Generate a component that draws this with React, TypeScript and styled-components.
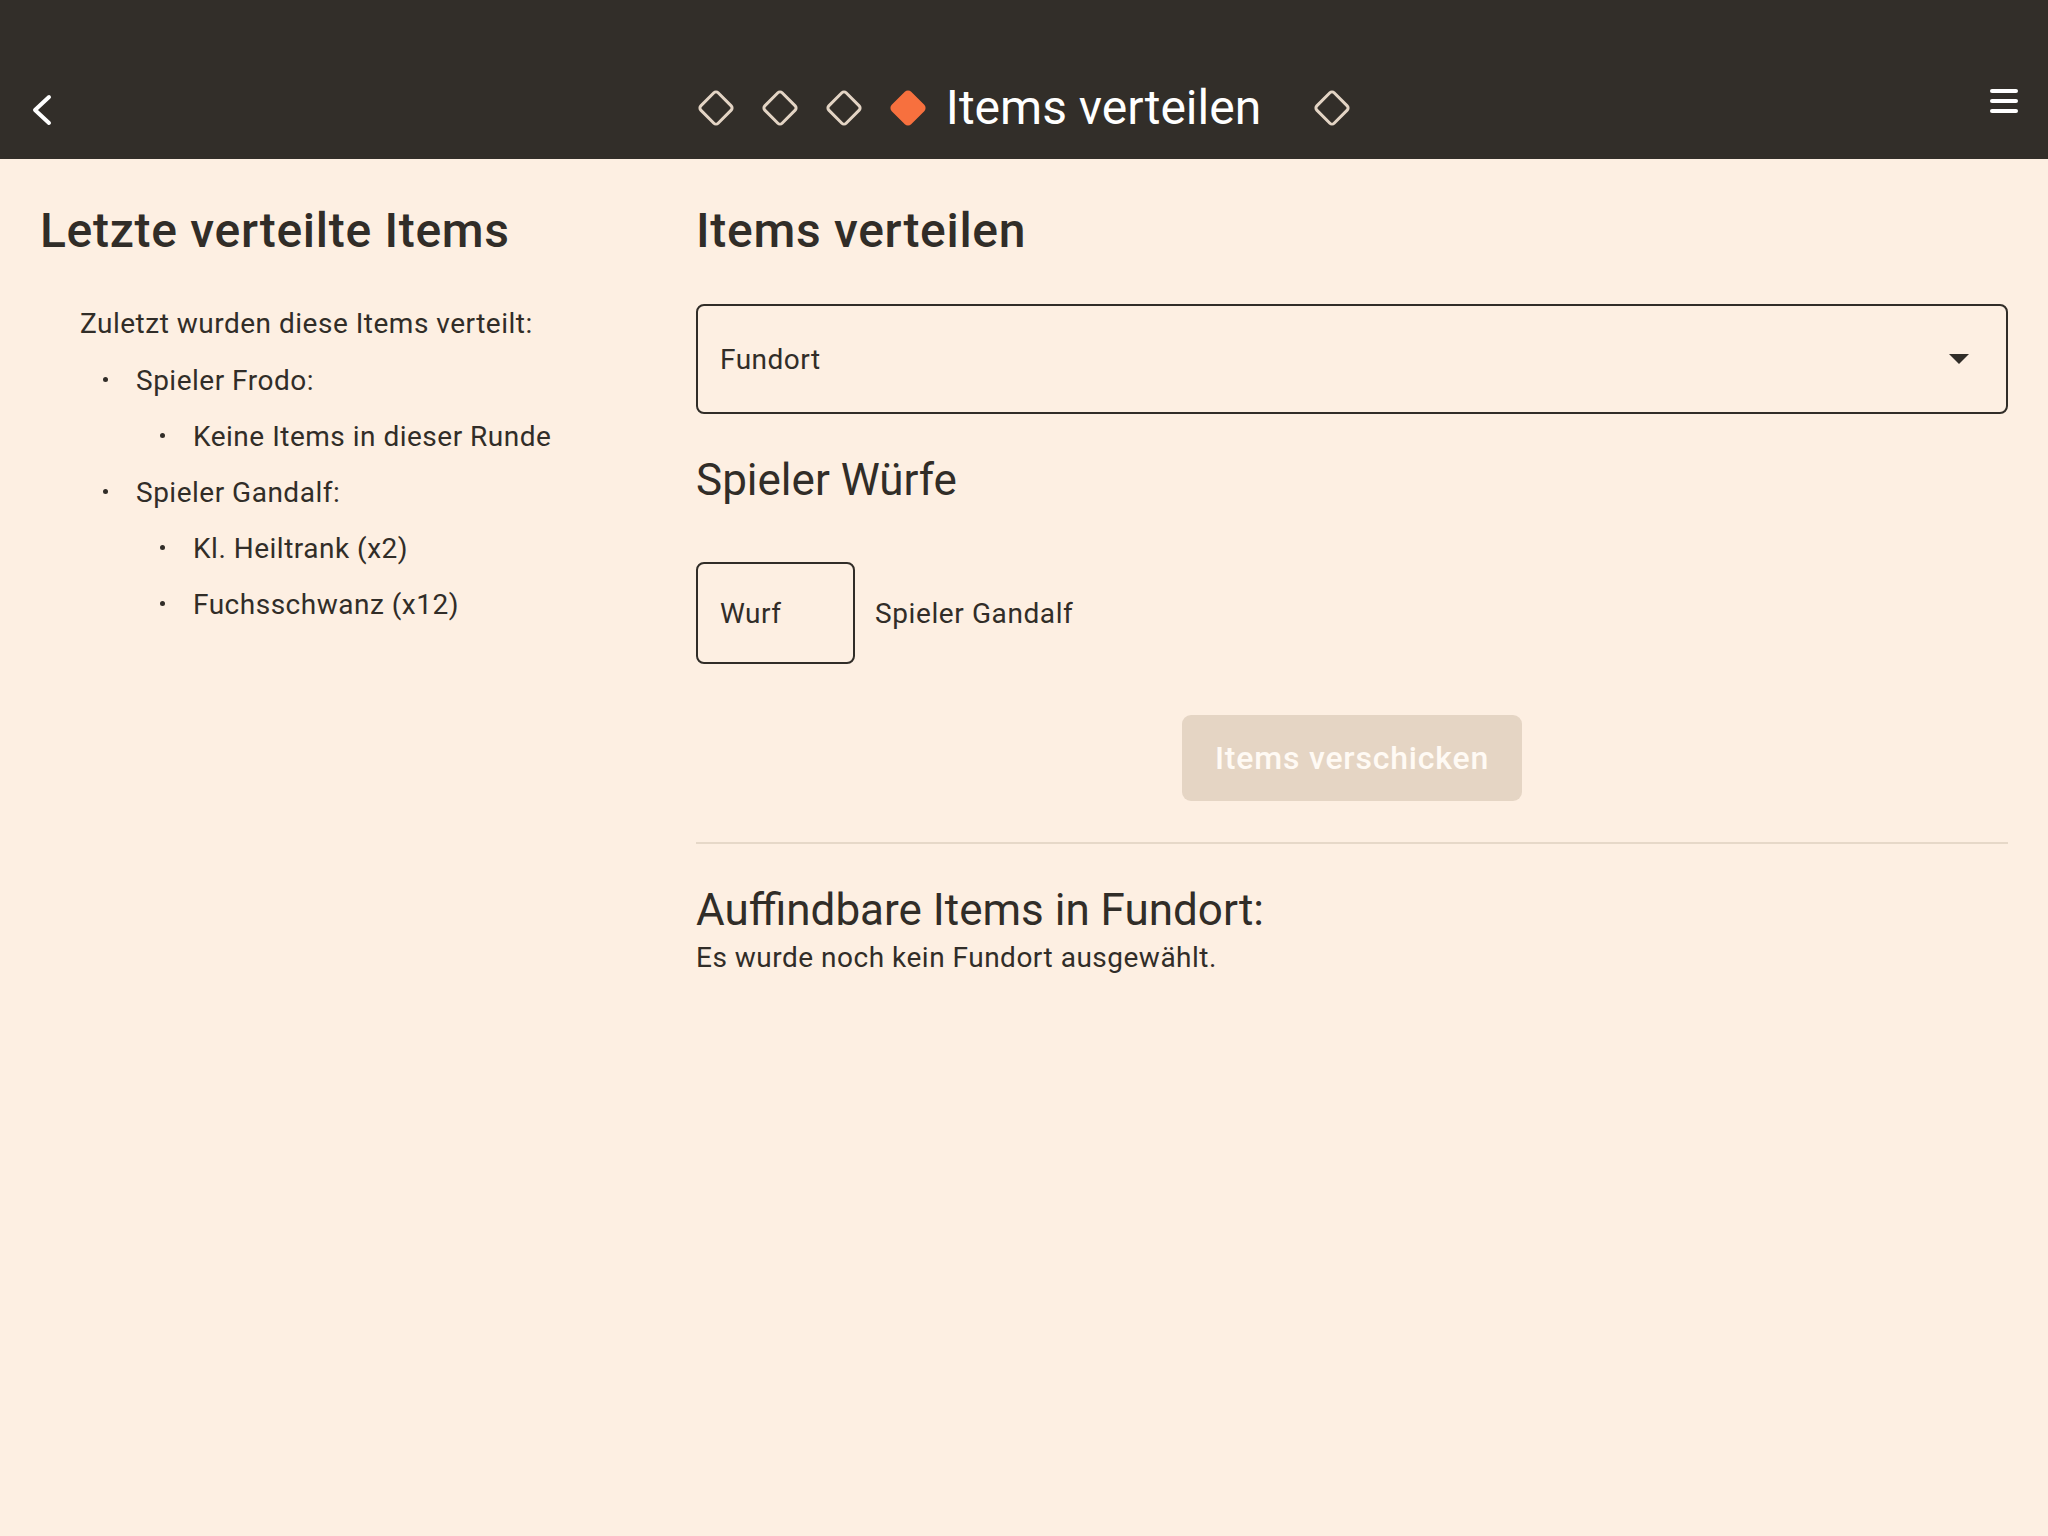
import React from "react";
import styled, { createGlobalStyle } from "styled-components";

const GlobalStyle = createGlobalStyle`
  html, body {
    margin: 0;
    padding: 0;
    background: #fdefe2;
  }
  body {
    font-family: Roboto, "Liberation Sans", sans-serif;
    color: #312d28;
    min-height: 1536px;
  }
  * { box-sizing: border-box; }
`;

const Page = styled.div`
  min-height: 1536px;
  background: #fdefe2;
`;

const Header = styled.header`
  background: #322e29;
  height: 159px;
  padding-top: 56px;
  display: grid;
  grid-template-columns: 1fr auto 1fr;
  align-items: center;
`;

const IconButton = styled.button<{ $side: "left" | "right"; $shift: number }>`
  background: none;
  border: none;
  padding: 0;
  cursor: pointer;
  display: flex;
  justify-self: ${(p) => (p.$side === "left" ? "start" : "end")};
  margin-left: ${(p) => (p.$side === "left" ? "32px" : "0")};
  margin-right: ${(p) => (p.$side === "right" ? "30px" : "0")};
  transform: translateY(${(p) => p.$shift}px);
`;

const Stepper = styled.nav`
  display: flex;
  align-items: center;
  gap: 26px;
`;

const StepTitle = styled.h1`
  margin: 0 26px 0 -7px;
  font-size: 48px;
  font-weight: 400;
  line-height: 56px;
  color: #ffffff;
  white-space: nowrap;
`;

const Main = styled.main`
  display: grid;
  grid-template-columns: 1fr 2fr;
  padding: 44px 40px 0 40px;
`;

const Column = styled.section`
  display: flex;
  flex-direction: column;
  min-width: 0;
`;

const Heading = styled.h2`
  margin: 0;
  font-size: 48px;
  font-weight: 500;
  line-height: 56px;
  letter-spacing: 0.7px;
`;

const SubHeading = styled.h3<{ $top: number }>`
  margin: ${(p) => p.$top}px 0 0 0;
  font-size: 44px;
  font-weight: 400;
  line-height: 52px;
  letter-spacing: 0;
`;

const BodyText = styled.p<{ $top: number; $indent?: number }>`
  margin: ${(p) => p.$top}px 0 0 ${(p) => p.$indent ?? 0}px;
  font-size: 28px;
  line-height: 56px;
  letter-spacing: 0.5px;
`;

const List = styled.ul<{ $indent: number }>`
  list-style: none;
  margin: 0;
  padding: 0 0 0 ${(p) => p.$indent}px;
`;

const Item = styled.li`
  margin: 0;
`;

const ItemRow = styled.div`
  display: flex;
  align-items: center;
  height: 56px;
  font-size: 28px;
  letter-spacing: 0.5px;
  white-space: nowrap;
`;

const Dot = styled.span`
  width: 5px;
  height: 5px;
  border-radius: 50%;
  background: #312d28;
  margin-right: 28px;
  flex: none;
  transform: translateY(-1px);
`;

const Select = styled.div`
  margin-top: 45px;
  height: 110px;
  border: 2px solid #312d28;
  border-radius: 8px;
  display: flex;
  align-items: center;
  justify-content: space-between;
  padding: 0 37px 0 22px;
  font-size: 28px;
  letter-spacing: 0.5px;
  cursor: pointer;
`;

const Caret = styled.span`
  width: 0;
  height: 0;
  border-left: 10px solid transparent;
  border-right: 10px solid transparent;
  border-top: 10px solid #312d28;
`;

const RollRow = styled.div`
  margin-top: 56px;
  display: flex;
  align-items: center;
  gap: 20px;
`;

const RollInput = styled.div`
  width: 159px;
  height: 102px;
  border: 2px solid #312d28;
  border-radius: 8px;
  display: flex;
  align-items: center;
  padding-left: 22px;
  font-size: 28px;
  letter-spacing: 0.5px;
`;

const RollLabel = styled.span`
  font-size: 28px;
  letter-spacing: 0.6px;
`;

const SendButton = styled.button`
  align-self: center;
  margin-top: 51px;
  height: 86px;
  padding: 0 33px;
  border: none;
  border-radius: 9px;
  background: #e5d5c4;
  color: #fffaf4;
  font-family: Roboto, "Liberation Sans", sans-serif;
  font-size: 32px;
  font-weight: 500;
  letter-spacing: 0.8px;
  cursor: default;
`;

const Divider = styled.hr`
  margin: 41px 0 0 0;
  border: none;
  height: 2px;
  background: #e6d8c8;
`;

const FoundText = styled.p`
  margin: 4px 0 0 0;
  font-size: 28px;
  line-height: 36px;
  letter-spacing: 0.5px;
`;

const Diamond: React.FC<{ active?: boolean }> = ({ active }) => (
  <svg width="38" height="38" viewBox="0 0 38 38" aria-hidden="true">
    <rect
      x="6.75"
      y="6.75"
      width="24.5"
      height="24.5"
      rx="3"
      transform="rotate(45 19 19)"
      fill={active ? "#f7703e" : "none"}
      stroke={active ? "#f7703e" : "#e3d4c4"}
      strokeWidth="3"
    />
  </svg>
);

const BackIcon = () => (
  <svg width="20" height="32" viewBox="0 0 20 32" aria-hidden="true">
    <polyline
      points="17,3 3,16 17,29"
      fill="none"
      stroke="#ffffff"
      strokeWidth="4"
      strokeLinecap="round"
      strokeLinejoin="round"
    />
  </svg>
);

const MenuIcon = () => (
  <svg width="28" height="24" viewBox="0 0 28 24" aria-hidden="true">
    <rect x="0" y="0" width="28" height="4" rx="2" fill="#ffffff" />
    <rect x="0" y="10" width="28" height="4" rx="2" fill="#ffffff" />
    <rect x="0" y="20" width="28" height="4" rx="2" fill="#ffffff" />
  </svg>
);

export default function App() {
  return (
    <Page>
      <GlobalStyle />
      <Header>
        <IconButton $side="left" $shift={2} aria-label="Zurück">
          <BackIcon />
        </IconButton>
        <Stepper>
          <Diamond />
          <Diamond />
          <Diamond />
          <Diamond active />
          <StepTitle>Items verteilen</StepTitle>
          <Diamond />
        </Stepper>
        <IconButton $side="right" $shift={-7} aria-label="Menü">
          <MenuIcon />
        </IconButton>
      </Header>
      <Main>
        <Column>
          <Heading>Letzte verteilte Items</Heading>
          <BodyText $top={37} $indent={40}>
            Zuletzt wurden diese Items verteilt:
          </BodyText>
          <List $indent={63}>
            <Item>
              <ItemRow>
                <Dot />
                Spieler Frodo:
              </ItemRow>
              <List $indent={57}>
                <Item>
                  <ItemRow>
                    <Dot />
                    Keine Items in dieser Runde
                  </ItemRow>
                </Item>
              </List>
            </Item>
            <Item>
              <ItemRow>
                <Dot />
                Spieler Gandalf:
              </ItemRow>
              <List $indent={57}>
                <Item>
                  <ItemRow>
                    <Dot />
                    Kl. Heiltrank (x2)
                  </ItemRow>
                </Item>
                <Item>
                  <ItemRow>
                    <Dot />
                    Fuchsschwanz (x12)
                  </ItemRow>
                </Item>
              </List>
            </Item>
          </List>
        </Column>
        <Column>
          <Heading>Items verteilen</Heading>
          <Select role="combobox">
            <span>Fundort</span>
            <Caret />
          </Select>
          <SubHeading $top={40}>Spieler Würfe</SubHeading>
          <RollRow>
            <RollInput>Wurf</RollInput>
            <RollLabel>Spieler Gandalf</RollLabel>
          </RollRow>
          <SendButton disabled>Items verschicken</SendButton>
          <Divider />
          <SubHeading $top={40}>Auffindbare Items in Fundort:</SubHeading>
          <FoundText>Es wurde noch kein Fundort ausgewählt.</FoundText>
        </Column>
      </Main>
    </Page>
  );
}
